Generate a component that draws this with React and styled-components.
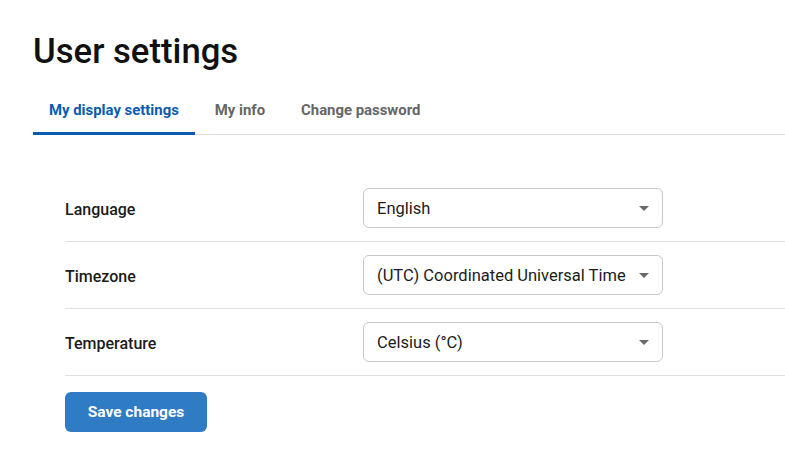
import React, { useState } from "react";
import styled, { createGlobalStyle, css } from "styled-components";

const GlobalStyle = createGlobalStyle`
  * { box-sizing: border-box; }
  body {
    margin: 0;
    background: #ffffff;
    font-family: Roboto, "Liberation Sans", Arial, sans-serif;
    color: #1c1c1c;
    overflow: hidden;
  }
`;

const Page = styled.div`
  padding: 29px 0 0 33px;
`;

const Title = styled.h1`
  margin: 0 0 27px;
  font-size: 34.7px;
  font-weight: 500;
  line-height: 44px;
  color: #111;
`;

const Tabs = styled.div`
  display: flex;
  gap: 4px;
  border-bottom: 1px solid #dedede;
`;

const Tab = styled.button`
  border: none;
  background: none;
  padding: 0 16px 12px;
  margin-bottom: -1px;
  font-family: inherit;
  font-size: 14.9px;
  line-height: 20px;
  font-weight: 700;
  color: #666;
  border-bottom: 3px solid transparent;
  cursor: pointer;
  ${(p) =>
    p.active &&
    css`
      color: #0b5cb0;
      border-bottom-color: #0b5cb0;
    `}
`;

const Form = styled.div`
  padding: 40px 0 0 32px;
`;

const Row = styled.div`
  display: grid;
  grid-template-columns: 298px 300px;
  align-items: center;
  height: 67px;
  border-bottom: 1px solid #e0e0e0;
`;

const Label = styled.label`
  font-size: 16px;
  font-weight: 500;
  color: #1c1c1c;
  padding-top: 2px;
`;

const SelectBox = styled.div`
  position: relative;
  display: flex;
  align-items: center;
  height: 40px;
  padding: 0 34px 0 13px;
  border: 1px solid #c8c8c8;
  border-radius: 6px;
  font-size: 16.5px;
  color: #1c1c1c;
  white-space: nowrap;
  overflow: hidden;
  cursor: pointer;
`;

const Caret = styled.span`
  position: absolute;
  right: 13px;
  top: 17px;
  width: 0;
  height: 0;
  border-left: 5px solid transparent;
  border-right: 5px solid transparent;
  border-top: 5px solid #6a6a6a;
`;

const SaveButton = styled.button`
  margin-top: 16px;
  width: 142px;
  height: 40px;
  border: none;
  border-radius: 6px;
  background: #2f7bc4;
  color: #fff;
  font-family: inherit;
  font-size: 15.5px;
  font-weight: 700;
  cursor: pointer;
`;

const tabs = ["My display settings", "My info", "Change password"];

const fields = [
  { label: "Language", value: "English" },
  { label: "Timezone", value: "(UTC) Coordinated Universal Time" },
  { label: "Temperature", value: "Celsius (°C)" },
];

export default function App() {
  const [active, setActive] = useState(0);

  return (
    <>
      <GlobalStyle />
      <Page>
        <Title>User settings</Title>
        <Tabs>
          {tabs.map((t, i) => (
            <Tab key={t} active={i === active} onClick={() => setActive(i)}>
              {t}
            </Tab>
          ))}
        </Tabs>
        <Form>
          {fields.map((f) => (
            <Row key={f.label}>
              <Label>{f.label}</Label>
              <SelectBox>
                {f.value}
                <Caret />
              </SelectBox>
            </Row>
          ))}
          <SaveButton>Save changes</SaveButton>
        </Form>
      </Page>
    </>
  );
}
